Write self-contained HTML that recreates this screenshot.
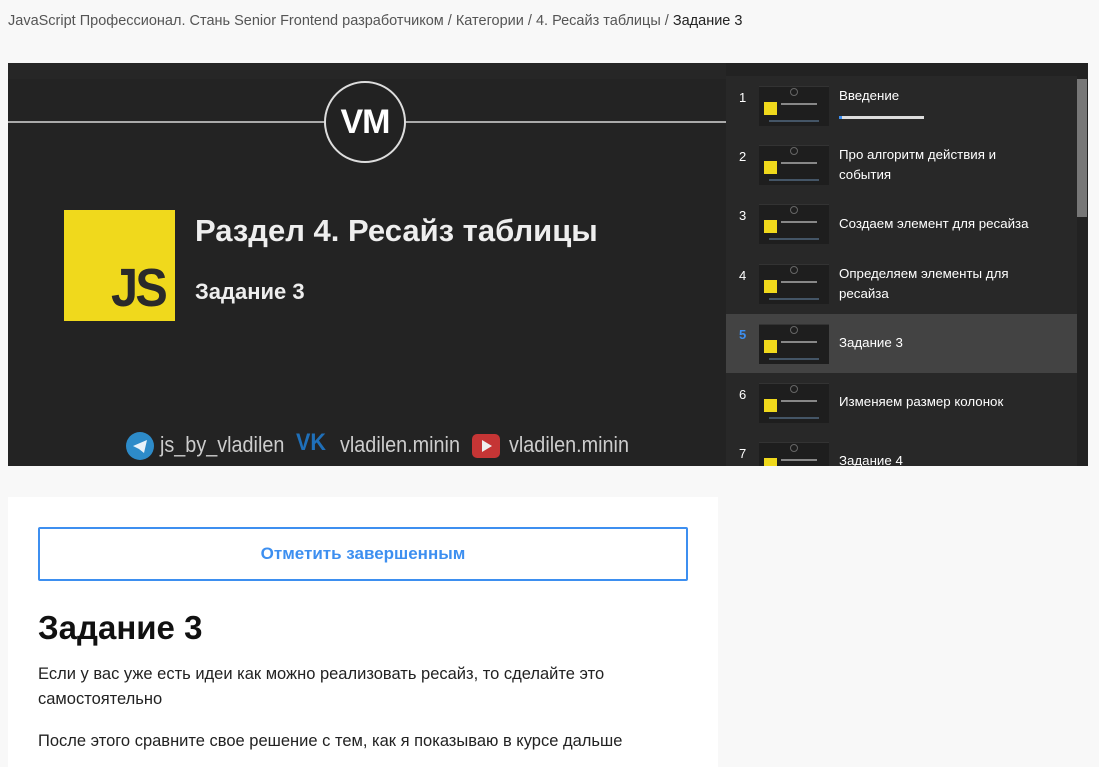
<!DOCTYPE html>
<html><head><meta charset="utf-8"><style>
*{margin:0;padding:0;box-sizing:border-box}
body{width:1099px;height:767px;overflow:hidden;background:#f8f8f8;font-family:"Liberation Sans","Noto Sans CJK SC",sans-serif;position:relative}
.crumb{position:absolute;left:8px;top:13px;font-size:14.5px;color:#555;white-space:nowrap}
.crumb b{font-weight:normal;color:#222}
.video{position:absolute;left:8px;top:63px;width:718px;height:403px;background:#232323;overflow:hidden}
.tbar{position:absolute;left:0;top:0;width:718px;height:16px;background:#262626}
.hline{position:absolute;left:0;top:58px;width:718px;height:2px;background:#aaa}
.vm{position:absolute;left:316px;top:18px;width:82px;height:82px;border:2px solid #ddd;border-radius:50%;background:#222;color:#fff;font-weight:bold;font-size:34px;text-align:center;line-height:78px;letter-spacing:-1px}
.js{position:absolute;left:56px;top:147px;width:111px;height:111px;background:#f0d91c}
.js span{position:absolute;right:10px;bottom:2px;font-size:54px;font-weight:bold;color:#2a2a2a;letter-spacing:-3px;transform:scaleX(0.9);transform-origin:right}
.t1{position:absolute;left:187px;top:150px;color:#eee;font-size:31px;font-weight:bold}
.t2{position:absolute;left:187px;top:216px;color:#eee;font-size:22px;font-weight:bold}
.soc{position:absolute;top:369px;color:#ccc;font-size:22px;white-space:nowrap;transform:scaleX(0.9);transform-origin:left}
.side{position:absolute;left:726px;top:63px;width:362px;height:403px;background:#282828;overflow:hidden}
.stop{position:absolute;left:0;top:0;width:362px;height:13px;background:#222}
.sb{position:absolute;left:351px;top:13px;width:11px;height:390px;background:#222}
.sbt{position:absolute;left:351px;top:16px;width:10px;height:138px;background:#777}
.it{position:absolute;left:0;width:351px;height:59px}
.it .n{position:absolute;left:13px;top:14px;color:#fff;font-size:13px}
.it .th{position:absolute;left:33px;top:10px;width:70px;height:40px;background:#1e1e1e;border-top:1px solid #333}
.th i{position:absolute;left:5px;top:15px;width:13px;height:13px;background:#f0d91c}
.th u{position:absolute;left:22px;top:16px;width:36px;height:2px;background:#888;text-decoration:none}
.th s{position:absolute;left:10px;bottom:4px;width:50px;height:2px;background:#456;text-decoration:none}
.th em{position:absolute;left:31px;top:1px;width:8px;height:8px;border-radius:50%;border:1px solid #666}
.it .tx{position:absolute;left:113px;color:#fff;font-size:13.3px;line-height:20px;width:205px}
.card{position:absolute;left:8px;top:497px;width:710px;height:270px;background:#fff}
.btn{position:absolute;left:30px;top:30px;width:650px;height:54px;border:2px solid #3d8ff0;border-radius:2px;color:#3d8ff0;font-weight:bold;font-size:17px;text-align:center;line-height:50px}
h1{position:absolute;left:30px;top:112px;font-size:33px;font-weight:bold;color:#111}
.p{position:absolute;left:30px;font-size:16.5px;color:#222;line-height:25px;width:620px}
</style></head><body>
<div class="crumb">JavaScript Профессионал. Стань Senior Frontend разработчиком / Категории / 4. Ресайз таблицы / <b>Задание 3</b></div>
<div class="video">
<div class="tbar"></div>
<div class="hline"></div>
<div class="vm">VM</div>
<div class="js"><span>JS</span></div>
<div class="t1">Раздел 4. Ресайз таблицы</div>
<div class="t2">Задание 3</div>
<svg style="position:absolute;left:118px;top:369px" width="28" height="28"><circle cx="14" cy="14" r="14" fill="#2d8bc9"/><path d="M7 14 L21 8 L18 21 L13 17 Z" fill="#e8f2fa"/></svg>
<div class="soc" style="left:152px">js_by_vladilen</div>
<div class="soc" style="left:288px;color:#1f6fb8;font-weight:bold;font-size:24px;top:366px">VK</div>
<div class="soc" style="left:332px">vladilen.minin</div>
<div style="position:absolute;left:464px;top:371px;width:28px;height:24px;background:#c53535;border-radius:5px"><div style="position:absolute;left:10px;top:6px;border-left:10px solid #eee;border-top:6px solid transparent;border-bottom:6px solid transparent"></div></div>
<div class="soc" style="left:501px">vladilen.minin</div>
</div>
<div class="side">
<div class="stop"></div>
<div class="it" style="top:13px"><span class="n" style="top:14px">1</span><div class="th"><em></em><i></i><u></u><s></s></div><div class="tx" style="top:10px">Введение</div><div style="position:absolute;left:113px;top:40px;width:85px;height:3px;background:#ddd"><div style="width:3px;height:3px;background:#3d8ff0"></div></div></div>
<div class="it" style="top:72px"><span class="n" style="top:14px">2</span><div class="th"><em></em><i></i><u></u><s></s></div><div class="tx" style="top:10px">Про алгоритм действия и события</div></div>
<div class="it" style="top:131px"><span class="n" style="top:14px">3</span><div class="th"><em></em><i></i><u></u><s></s></div><div class="tx" style="top:20px">Создаем элемент для ресайза</div></div>
<div class="it" style="top:191px"><span class="n" style="top:14px">4</span><div class="th"><em></em><i></i><u></u><s></s></div><div class="tx" style="top:10px">Определяем элементы для ресайза</div></div>
<div class="it" style="top:251px;background:#434343"><span class="n" style="top:13px;color:#3d8ff0;font-weight:bold">5</span><div class="th"><em></em><i></i><u></u><s></s></div><div class="tx" style="top:19px">Задание 3</div></div>
<div class="it" style="top:310px"><span class="n" style="top:14px">6</span><div class="th"><em></em><i></i><u></u><s></s></div><div class="tx" style="top:19px">Изменяем размер колонок</div></div>
<div class="it" style="top:369px"><span class="n" style="top:14px">7</span><div class="th"><em></em><i></i><u></u><s></s></div><div class="tx" style="top:19px">Задание 4</div></div>
<div class="sb"></div><div class="sbt"></div>
</div>
<div class="card">
<div class="btn">Отметить завершенным</div>
<h1>Задание 3</h1>
<div class="p" style="top:165px">Если у вас уже есть идеи как можно реализовать ресайз, то сделайте это самостоятельно</div>
<div class="p" style="top:232px">После этого сравните свое решение с тем, как я показываю в курсе дальше</div>
</div>
</body></html>
